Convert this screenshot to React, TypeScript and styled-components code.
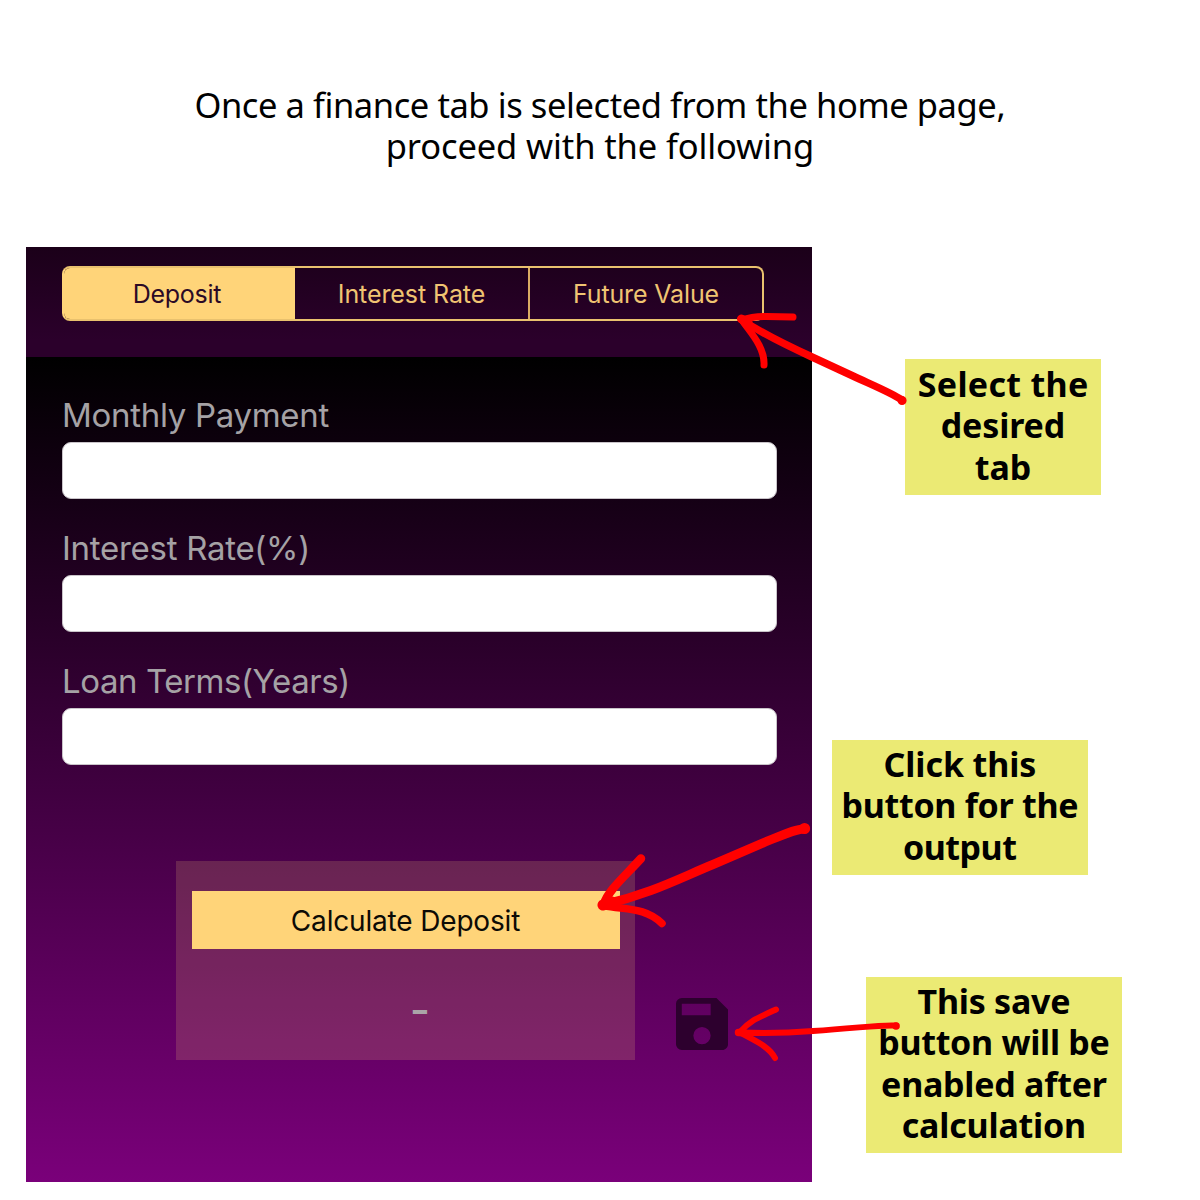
import React from "react";
import styled, { createGlobalStyle } from "styled-components";

const GOLD = "#ffd479";

const GlobalStyle = createGlobalStyle`
  *, *::before, *::after { box-sizing: border-box; }
  body { margin: 0; background: #fff; }
`;

const Page = styled.main`
  position: relative;
  width: 1200px;
  height: 1200px;
  overflow: hidden;
  display: flex;
  flex-direction: column;
  background: #fff;
`;

const Heading = styled.h1`
  margin: 0;
  height: 247px;
  padding-top: 84px;
  display: flex;
  flex-direction: column;
  align-items: center;
  font: 400 34.5px/41.4px "Noto Sans", "Open Sans", sans-serif;
  color: #000;
`;

const Line = styled.span<{ $tracking?: number }>`
  display: block;
  white-space: nowrap;
  letter-spacing: ${(p) => p.$tracking ?? 0}px;
  margin-right: ${(p) => -(p.$tracking ?? 0)}px;
`;

const Content = styled.div`
  display: flex;
  padding-left: 26px;
`;

const Phone = styled.section`
  width: 786px;
  height: 935px;
  display: flex;
  flex-direction: column;
  font-family: Inter, "Liberation Sans", sans-serif;
`;

const TabBar = styled.header`
  height: 110px;
  padding: 19px 0 0 36px;
  background: linear-gradient(#1b0019, #2b002b 85%);
`;

const Segments = styled.div`
  width: 702px;
  height: 55px;
  display: grid;
  grid-template-columns: 231px 235px 1fr;
  border: 2px solid #e9c16e;
  border-left-color: ${GOLD};
  border-radius: 8px;
  overflow: hidden;
`;

const Segment = styled.button<{ $active?: boolean; $tracking: number }>`
  border: 0;
  border-right: ${(p) => (p.$active ? "0" : "2px solid #d9ac63")};
  margin: ${(p) => (p.$active ? "-1px 0 -1px -1px" : "0")};
  padding: ${(p) => (p.$active ? "0 4px 0 0" : "1px 0 0")};
  background: ${(p) => (p.$active ? GOLD : "transparent")};
  color: ${(p) => (p.$active ? "#2b0a26" : "#f0c472")};
  font: 400 25px/50px Inter, "Liberation Sans", sans-serif;
  letter-spacing: ${(p) => p.$tracking}px;
  &:last-child { border-right: 0; }
`;

const Screen = styled.div`
  flex: 1;
  display: flex;
  flex-direction: column;
  padding: 36px 35px 0 36px;
  background: linear-gradient(#000, #7a007a);
`;

const Field = styled.label`
  display: flex;
  flex-direction: column;
  height: 133px;
`;

const FieldName = styled.span<{ $tracking: number }>`
  height: 49px;
  font-size: 33px;
  line-height: 45px;
  color: #a5a2a5;
  white-space: nowrap;
  letter-spacing: ${(p) => p.$tracking}px;
`;

const Input = styled.input`
  width: 715px;
  height: 57px;
  border: 1px solid #c9c4c9;
  border-radius: 9px;
  background: #fff;
  outline: none;
`;

const ResultRow = styled.div`
  display: flex;
  align-items: flex-end;
  gap: 41px;
  margin: 69px 0 0 114px;
`;

const ResultPanel = styled.div`
  width: 459px;
  height: 199px;
  padding: 30px 15px 0 16px;
  background: rgba(255, 212, 121, 0.17);
  display: flex;
  flex-direction: column;
`;

const CalculateButton = styled.button`
  height: 58px;
  padding: 2px 1px 0 0;
  border: 0;
  background: ${GOLD};
  color: #0c0a05;
  font: 400 28px/56px Inter, "Liberation Sans", sans-serif;
  letter-spacing: -0.17px;
`;

const Output = styled.output`
  align-self: center;
  margin: 31px 0 0 28px;
  color: #aaa4a8;
  font: 500 44px/60px Inter, "Liberation Sans", sans-serif;
`;

const SaveButton = styled.button`
  padding: 0;
  border: 0;
  margin-bottom: 10px;
  background: none;
  display: flex;
`;

const Notes = styled.aside`
  display: flex;
  flex-direction: column;
`;

const Note = styled.p<{ $left: number; $gap: number; $width: number; $height: number; $top: number }>`
  margin: ${(p) => p.$gap}px 0 0 ${(p) => p.$left}px;
  width: ${(p) => p.$width}px;
  height: ${(p) => p.$height}px;
  padding-top: ${(p) => p.$top}px;
  display: flex;
  flex-direction: column;
  align-items: center;
  background: #ebea74;
  color: #000;
  font: 700 34px/41.4px "Noto Sans", "Open Sans", sans-serif;
`;

const ArrowLayer = styled.svg`
  position: absolute;
  inset: 0;
  pointer-events: none;
`;

const tabs = [
  { name: "Deposit", tracking: -0.25 },
  { name: "Interest Rate", tracking: -0.08 },
  { name: "Future Value", tracking: -0.15 },
];

const fields = [
  { name: "Monthly Payment", tracking: -0.3 },
  { name: "Interest Rate(%)", tracking: -0.28 },
  { name: "Loan Terms(Years)", tracking: -0.43 },
];

const arrows = [
  { d: "M902 400C892 393 870 384 853 376L812 357C788 346 763 334 742 320", w: 7.5 },
  { d: "M742 320Q752 316.500 766 316.500T793 317", w: 7 },
  { d: "M742 320C748 330 765 346 764 365", w: 7 },
  { d: "M741.500 319L748 322M902 400.500h.1", w: 9 },
  { d: "M805 829C798 828 785 834 763 843L713 864.500C680 878 650 894 604 904.500", w: 9 },
  { d: "M604 904C608 891 622 879 641 858.500", w: 8.5 },
  { d: "M604 905.500C625 910 645 907 662 923.500", w: 7.5 },
  { d: "M603 905L612 902M804.500 828.500h.1", w: 11 },
  { d: "M896 1025.500C880 1024.500 860 1028 813 1031Q776 1034 740 1032.500", w: 6 },
  { d: "M740 1032C750 1021 755 1019 776 1009.500", w: 6 },
  { d: "M740 1032.500C753 1040 769 1046 775 1058", w: 6 },
  { d: "M738.500 1032.500h5M896 1026h.1", w: 7.5 },
];

export default function App() {
  return (
    <>
      <GlobalStyle />
      <Page>
        <Heading>
          <Line $tracking={-0.42}>Once a finance tab is selected from the home page,</Line>
          <Line $tracking={-0.12}>proceed with the following</Line>
        </Heading>
        <Content>
          <Phone>
            <TabBar>
              <Segments>
                {tabs.map((t, i) => (
                  <Segment key={t.name} $active={i === 0} $tracking={t.tracking}>
                    {t.name}
                  </Segment>
                ))}
              </Segments>
            </TabBar>
            <Screen>
              {fields.map((f) => (
                <Field key={f.name}>
                  <FieldName $tracking={f.tracking}>{f.name}</FieldName>
                  <Input />
                </Field>
              ))}
              <ResultRow>
                <ResultPanel>
                  <CalculateButton>Calculate Deposit</CalculateButton>
                  <Output>-</Output>
                </ResultPanel>
                <SaveButton aria-label="Save">
                  <svg width="52" height="52" viewBox="3 3 18 18" fill="#2d002e">
                    <path d="M17 3H5a2 2 0 0 0-2 2v14a2 2 0 0 0 2 2h14c1.100 0 2-.9 2-2V7l-4-4zm-5 16a3 3 0 1 1 0-6 3 3 0 0 1 0 6zm3-10H5V5h10v4z" />
                  </svg>
                </SaveButton>
              </ResultRow>
            </Screen>
          </Phone>
          <Notes>
            <Note $left={93} $gap={112} $width={196} $height={136} $top={5}>
              <Line $tracking={0.3}>Select the</Line>
              <Line $tracking={-0.15}>desired</Line>
              <Line>tab</Line>
            </Note>
            <Note $left={20} $gap={245} $width={256} $height={135} $top={4}>
              <Line $tracking={-0.1}>Click this</Line>
              <Line $tracking={-0.3}>button for the</Line>
              <Line $tracking={-0.5}>output</Line>
            </Note>
            <Note $left={54} $gap={102} $width={256} $height={176} $top={4}>
              <Line $tracking={-0.25}>This save</Line>
              <Line $tracking={-0.3}>button will be</Line>
              <Line $tracking={-0.25}>enabled after</Line>
              <Line $tracking={-0.2}>calculation</Line>
            </Note>
          </Notes>
        </Content>
        <ArrowLayer width="1200" height="1200" fill="none" stroke="#f00" strokeLinecap="round" strokeLinejoin="round">
          {arrows.map((a) => (
            <path key={a.d} d={a.d} strokeWidth={a.w} />
          ))}
        </ArrowLayer>
      </Page>
    </>
  );
}
